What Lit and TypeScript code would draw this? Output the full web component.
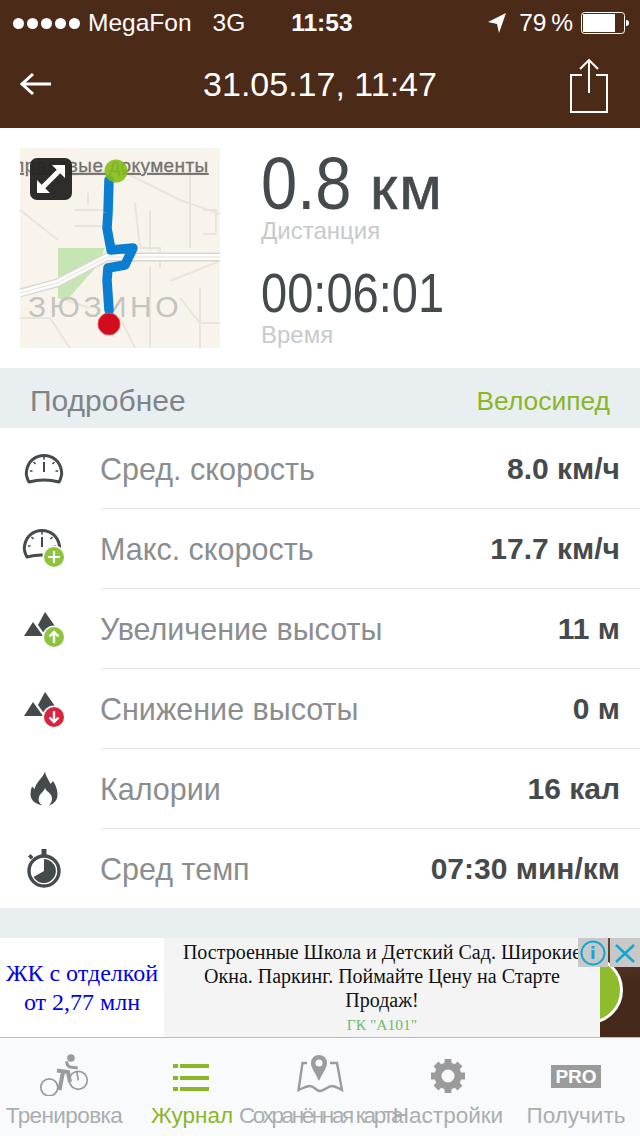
import { LitElement, css, html, svg } from 'lit';
import { customElement } from 'lit/decorators.js';

const INK = '#454a4d';

const speedo = svg`<path d="M7 36C4.500 31.500 4 28 4.500 25 6 15.500 13 9.500 22 9.500S38 15.500 39.500 25c.5 3 0 6.500-2.500 11-9-2.500-21-2.500-30 0z" fill="none" stroke="${INK}" stroke-width="3" stroke-linejoin="round"/><path d="M22 16v10" stroke="${INK}" stroke-width="2"/><path d="M22 10.500v3M8 25h2.500M33.500 25H36M11.500 16l2 2M32.500 16l-2 2" stroke="${INK}" stroke-width="1.600"/>`;

const peaks = svg`<path d="M11 16 21 30H2zM23 6 33.700 21 21 26l-5-7z" fill="${INK}"/>`;

const badge = (color: string, kind: 'plus' | 'up' | 'down') => svg`
  <circle cx="32" cy="31" r="11.500" fill="#fff"/>
  <circle cx="32" cy="31" r="10" fill="${color}"/>
  ${kind === 'plus'
    ? svg`<path d="M32 25v12M26 31h12" stroke="#fff" stroke-width="2.200"/>`
    : kind === 'up'
      ? svg`<path d="M32 37V26M27.500 30.500 32 26l4.500 4.500" fill="none" stroke="#fff" stroke-width="2.400"/>`
      : svg`<path d="M32 25v11M27.500 31.500 32 36l4.500-4.500" fill="none" stroke="#fff" stroke-width="2.400"/>`}`;

const rows = [
  { label: 'Сред. скорость', value: '8.0 км/ч', icon: speedo },
  {
    label: 'Макс. скорость',
    value: '17.7 км/ч',
    icon: svg`<g transform="translate(-2 -5)">${speedo}</g>${badge('#8cc43c', 'plus')}`,
  },
  { label: 'Увеличение высоты', value: '11 м', icon: svg`${peaks}${badge('#8cc43c', 'up')}` },
  { label: 'Снижение высоты', value: '0 м', icon: svg`${peaks}${badge('#d9233f', 'down')}` },
  {
    label: 'Калории',
    value: '16 кал',
    icon: svg`<path d="M23 5.500C24 11 27 14 28.500 18L31 15c3 4 4.500 9 4.500 14s-3.500 9-8.500 10.500c3-3.500 4-6.500 2-10.500-2-3-5-4-6-7-1 4-5 5-6 9-1 3 0 6 3 8.500C14 38 9 35 8.500 29c0-3 .5-6 1.500-8.500l2.500 2.500C14 16 21 12 23 5.500z" fill="${INK}"/>`,
  },
  {
    label: 'Сред темп',
    value: '07:30 мин/км',
    icon: svg`<circle cx="22" cy="25" r="15" fill="none" stroke="${INK}" stroke-width="3.400"/><path d="M22 25V13a12 12 0 1 1-10.500 18z" fill="${INK}"/><path d="M19.500 3h5v6h-5zM6 10.500 8.500 8l3 3L9 13.500z" fill="${INK}"/>`,
  },
];

const tabs = [
  {
    label: 'Тренировка',
    cls: 'snug',
    icon: svg`<g fill="none" stroke="#9b9b9b" stroke-width="1.700"><circle cx="17.300" cy="41.300" r="8.500"/><circle cx="46.300" cy="34.300" r="9"/><path d="M46.300 34.300 44.700 25.300"/></g><circle cx="39" cy="12" r="3.800" fill="#9b9b9b"/><path d="M34.700 15.300c0 3 1 5 3.500 5.700l7.500 1" fill="none" stroke="#9b9b9b" stroke-width="3"/><path d="M25 24.500 36 26l2 10M31 26l-3.500 18" fill="none" stroke="#9b9b9b" stroke-width="4"/>`,
  },
  {
    label: 'Журнал',
    cls: 'active',
    icon: svg`<path d="M13 18h5v4h-5zM20 18h29v4H20zM13 30h5v4h-5zM20 30h29v4H20zM13 41h5v4h-5zM20 41h29v4H20z" fill="#8ab628"/>`,
  },
  {
    label: 'Сохранённая карта',
    cls: 'tight',
    icon: svg`<path d="M19 17h-4.500l-4 27c4.500-2 8.500-4 11.500-4 4 0 6 5 10 5s8-5 12-5c3 0 6 2 10 4l-5-27h-7" fill="none" stroke="#9b9b9b" stroke-width="2.400"/><path fill-rule="evenodd" d="M31 9c4.500 0 8 3.500 8 8 0 5-4.500 10-8 18-3.500-8-8-13-8-18 0-4.500 3.500-8 8-8zm0 4.500a3.500 3.500 0 1 0 0 7 3.500 3.500 0 0 0 0-7z" fill="#9b9b9b"/>`,
  },
  {
    label: 'Настройки',
    cls: '',
    icon: svg`<g transform="translate(32 30)"><circle r="10" fill="none" stroke="#9b9b9b" stroke-width="7"/><path d="M-3.500-17h7v6h-7zM-3.500 11h7v6h-7zM-17-3.500h6v7h-6zM11-3.500h6v7h-6z" fill="#9b9b9b"/><path d="M-3.500-17h7v6h-7zM-3.500 11h7v6h-7zM-17-3.500h6v7h-6zM11-3.500h6v7h-6z" fill="#9b9b9b" transform="rotate(45)"/></g>`,
  },
];

@customElement('app-root')
export class AppRoot extends LitElement {
  static styles = css`
    :host {
      display: block;
      width: 640px;
      height: 1136px;
      overflow: hidden;
      background: #fff;
      font-family: 'Liberation Sans', Arial, sans-serif;
      color: #454a4d;
    }
    .top {
      height: 128px;
      background: #4b2a18;
      color: #fff;
    }
    .status {
      height: 46px;
      padding: 0 11px 0 13px;
      display: flex;
      align-items: center;
      font-size: 24.500px;
    }
    .dots {
      display: flex;
      gap: 3px;
      margin-right: 8px;
    }
    .dots i {
      width: 11px;
      height: 11px;
      border-radius: 50%;
      background: #fff;
    }
    .net {
      margin-left: 21px;
    }
    .clock {
      margin-left: 46px;
      font-weight: bold;
    }
    .status-right {
      margin-left: auto;
      display: flex;
      align-items: center;
    }
    .pct {
      margin: 0 8px 0 13px;
      word-spacing: -2px;
    }
    .nav {
      height: 76px;
      padding: 0 32px 6px 32px;
      display: grid;
      grid-template-columns: 1fr auto 1fr;
      align-items: center;
    }
    .nav .back {
      margin-left: -12px;
    }
    .nav .share {
      justify-self: end;
      margin-top: 4px;
    }
    .title {
      font-size: 34px;
    }
    .stats {
      height: 240px;
      padding: 20px;
      box-sizing: border-box;
      display: flex;
      gap: 41px;
    }
    .map {
      position: relative;
      width: 200px;
      height: 200px;
    }
    .map svg.bg {
      display: block;
    }
    .expand {
      position: absolute;
      left: 10px;
      top: 10px;
      width: 42px;
      height: 42px;
      border-radius: 7px;
      background: rgba(38, 36, 34, 0.96);
    }
    .figures {
      display: flex;
      flex-direction: column;
    }
    .big {
      display: flex;
      align-items: baseline;
      height: 69px;
      line-height: 72px;
    }
    .num {
      width: 109px;
      font-size: 74px;
      transform: scaleX(0.88);
      transform-origin: left;
    }
    .unit {
      font-size: 62px;
      letter-spacing: 2px;
      -webkit-text-stroke: 0.6px #454a4d;
    }
    .time {
      font-size: 56px;
      line-height: 56px;
      margin-top: 20px;
      white-space: nowrap;
      transform: scaleX(0.84);
      transform-origin: left;
    }
    .cap {
      font-size: 24px;
      line-height: 28px;
      color: #c6cacc;
    }
    .section {
      height: 60px;
      padding: 0 30px 0 30px;
      background: #e9eef1;
      display: flex;
      align-items: center;
      justify-content: space-between;
      font-size: 30px;
      color: #808487;
    }
    .section span {
      margin-top: 6px;
    }
    .section b {
      font-weight: normal;
      font-size: 26.400px;
      color: #8ab628;
      margin-top: 6px;
    }
    .row {
      height: 80px;
      display: flex;
      align-items: center;
    }
    .row svg {
      width: 44px;
      height: 44px;
      margin: 0 34px 0 22px;
      flex: none;
    }
    .row-body {
      flex: 1;
      align-self: stretch;
      display: flex;
      align-items: center;
      justify-content: space-between;
      padding: 2px 20px 0 0;
      box-sizing: border-box;
      font-size: 30.500px;
      color: #8a8e90;
    }
    .row + .row .row-body {
      border-top: 1px solid #e6e8e9;
      padding-top: 1px;
    }
    .row-body b {
      color: #454a4d;
      font-size: 30px;
    }
    .gap {
      height: 30px;
      background: #e9eef1;
    }
    .ad {
      position: relative;
      height: 99px;
      display: flex;
      background: #f4f4f4;
      font-family: 'Liberation Serif', 'Times New Roman', serif;
      border-bottom: 1px solid #bdbdbd;
    }
    .ad-left {
      width: 164px;
      background: #fff;
      color: #0000ee;
      font-size: 24px;
      line-height: 29px;
      text-align: center;
      padding-top: 21px;
      box-sizing: border-box;
      white-space: nowrap;
    }
    .ad-mid {
      flex: 1;
      min-width: 0;
      text-align: center;
      color: #111;
      font-size: 20px;
      line-height: 24px;
      padding-top: 2px;
      white-space: nowrap;
    }
    .ad-mid span {
      display: block;
      color: #6dbb70;
      font-size: 15.500px;
      line-height: 26px;
    }
    .ad-right {
      width: 40px;
      background: linear-gradient(170deg, #6a4a34 0%, #45291a 45%);
      position: relative;
      overflow: hidden;
    }
    .ad-right::before {
      content: '';
      position: absolute;
      left: -45px;
      top: 18px;
      width: 68px;
      height: 68px;
      border-radius: 50%;
      background: #8fbc2c;
      border: 3px solid #fff;
      box-sizing: border-box;
    }
    .ad-btns {
      position: absolute;
      right: 0;
      top: 0;
      display: flex;
      gap: 2px;
    }
    .ad-btns svg {
      display: block;
      background: #c8c8c8;
    }
    .tabbar {
      height: 98px;
      background: #f9fafc;
      display: grid;
      grid-template-columns: repeat(5, 128px);
    }
    .tab {
      display: flex;
      flex-direction: column;
      align-items: center;
      color: #a9aeb0;
      font-size: 22.500px;
      white-space: nowrap;
      min-width: 0;
    }
    .tab svg {
      width: 64px;
      height: 50px;
      margin-top: 8px;
      flex: none;
    }
    .tab span {
      margin-top: 7px;
      line-height: 26px;
    }
    .tab.active {
      color: #8ab628;
    }
    .tab.snug span {
      letter-spacing: -0.600px;
    }
    .tab.tight span {
      letter-spacing: -2.400px;
    }
    .pro {
      margin-top: 27px;
      width: 50px;
      height: 23px;
      background: #9b9b9b;
      color: #fff;
      font-size: 19px;
      font-weight: bold;
      line-height: 23px;
      text-align: center;
    }
    .tab .pro + span {
      margin-top: 15px;
    }
  `;

  render() {
    return html`
      <div class="top">
        <div class="status">
          <div class="dots"><i></i><i></i><i></i><i></i><i></i></div>
          <span>MegaFon</span><span class="net">3G</span><span class="clock">11:53</span>
          <div class="status-right">
            <svg width="18" height="22" viewBox="0 0 18 22"><path d="M18 1 11 21 9 12 0 10z" fill="#fff"/></svg>
            <span class="pct">79 %</span>
            <svg width="48" height="22" viewBox="0 0 48 22">
              <rect x=".5" y=".5" width="43" height="21" rx="3" fill="none" stroke="#fff"/>
              <rect x="2" y="2" width="32" height="18" fill="#fff"/>
              <path d="M45 8c2 0 3 1 3 3s-1 3-3 3z" fill="#fff"/>
            </svg>
          </div>
        </div>
        <div class="nav">
          <svg class="back" width="32" height="24" viewBox="0 0 32 24"><path d="M31 12H3M13 2 2 12l11 10" fill="none" stroke="#fff" stroke-width="3"/></svg>
          <span class="title">31.05.17, 11:47</span>
          <svg class="share" width="38" height="54" viewBox="0 0 38 54"><path d="M12 16H1v37h36V16H26M19 34V1M10 10l9-9 9 9" fill="none" stroke="#fff" stroke-width="2"/></svg>
        </div>
      </div>

      <div class="stats">
        <div class="map">
          <svg class="bg" width="200" height="200" viewBox="0 0 200 200">
            <rect width="200" height="200" fill="#f8f4ec"/>
            <g fill="none" stroke="#e9e5dd" stroke-width="2">
              <path d="M0 62 38 92M40 28l60-6 60 30 40 14M54 62h34M54 78h34M68 45v12M130 62v40M170 20v80M183 62h13v24h-13M150 133l50-20M130 118v82M180 140v60M0 170h30l20 30M160 150l20 25h20M40 150l30 10M120 100h20v20M115 55l5 45M100 170l15 30"/>
            </g>
            <path d="M38 100h47l-8 18-30 34-9-2z" fill="#c6e4b4"/>
            <path d="M0 145l37-10 50-26h113" fill="none" stroke="#dcd8d0" stroke-width="9"/>
            <path d="M0 145l37-10 50-26h113" fill="none" stroke="#fff" stroke-width="6"/>
            <path d="M0 145l37-10 50-26h113" fill="none" stroke="#e4e0d8" stroke-width="1"/>
            <text x="8" y="169" font-size="30" letter-spacing="3.500" fill="#c5c3bd" font-family="'Liberation Sans', sans-serif">ЗЮЗИНО</text>
            <text x="-6" y="24" font-size="19" letter-spacing=".4" text-decoration="underline" fill="#74726d" stroke="#74726d" stroke-width=".3" font-family="'Liberation Sans', sans-serif">правовые документы</text>
            <path d="M89 32 88 65 87 80 91 102 113 100 105 117 88 120 87 132 89 162" fill="none" stroke="#0a7ed0" stroke-width="9.500" stroke-linejoin="round" stroke-linecap="round"/>
            <circle cx="96" cy="23" r="11.500" fill="#83bb14" fill-opacity=".88"/>
            <circle cx="89" cy="176" r="11" fill="#d20c1c" stroke="#e05060"/>
          </svg>
          <div class="expand">
            <svg width="42" height="42" viewBox="0 0 42 42"><path d="M12 30 30 12" stroke="#fff" stroke-width="5"/><path d="M35 7H22l13 13zM7 35V22l13 13z" fill="#fff"/></svg>
          </div>
        </div>
        <div class="figures">
          <div class="big"><span class="num">0.8</span><span class="unit">км</span></div>
          <div class="cap">Дистанция</div>
          <div class="time">00:06:01</div>
          <div class="cap">Время</div>
        </div>
      </div>

      <div class="section"><span>Подробнее</span><b>Велосипед</b></div>

      ${rows.map(
        (r) => html`<div class="row">
          <svg viewBox="0 0 44 44">${r.icon}</svg>
          <div class="row-body"><span>${r.label}</span><b>${r.value}</b></div>
        </div>`
      )}

      <div class="gap"></div>

      <div class="ad">
        <div class="ad-left">ЖК с отделкой<br />от 2,77 млн</div>
        <div class="ad-mid">
          Построенные Школа и Детский Сад. Широкие<br />Окна. Паркинг. Поймайте Цену на Старте<br />Продаж!
          <span>ГК "А101"</span>
        </div>
        <div class="ad-right"></div>
        <div class="ad-btns">
          <svg width="30" height="29" viewBox="0 0 30 29"><circle cx="15" cy="15" r="11.500" fill="none" stroke="#10a8d0" stroke-width="2"/><path d="M15 12v9M15 8v2.500" stroke="#10a8d0" stroke-width="3"/></svg>
          <svg width="30" height="29" viewBox="0 0 30 29"><path d="M6 7l18 17M24 7 6 24" stroke="#10a8d0" stroke-width="2.500"/></svg>
        </div>
      </div>

      <div class="tabbar">
        ${tabs.map(
          (t) => html`<div class="tab ${t.cls}">
            <svg viewBox="0 0 64 50">${t.icon}</svg>
            <span>${t.label}</span>
          </div>`
        )}
        <div class="tab"><div class="pro">PRO</div><span>Получить</span></div>
      </div>
    `;
  }
}
